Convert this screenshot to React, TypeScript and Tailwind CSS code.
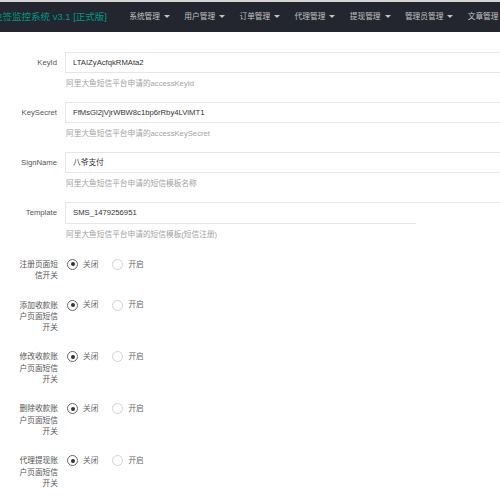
import React from 'react';

const menus = ['系统管理', '用户管理', '订单管理', '代理管理', '提现管理', '管理员管理', '文章管理'];

const inputs = [
    { label: 'KeyId', value: 'LTAIZyAcfqkRMAta2', tip: '阿里大鱼短信平台申请的accessKeyId', short: false },
    { label: 'KeySecret', value: 'FfMsGl2jVjrWBW8c1bp6rRby4LVlMT1', tip: '阿里大鱼短信平台申请的accessKeySecret', short: false },
    { label: 'SignName', value: '八爷支付', tip: '阿里大鱼短信平台申请的短信模板名称', short: false },
    { label: 'Template', value: 'SMS_1479256951', tip: '阿里大鱼短信平台申请的短信模板(短信注册)', short: true },
];

const switches = [
    '注册页面短信开关',
    '添加收款账户页面短信开关',
    '修改收款账户页面短信开关',
    '删除收款账户页面短信开关',
    '代理提现账户页面短信开关',
];

function Radio({ checked, text }: { checked: boolean; text: string }) {
    return (
        <div className="flex items-center">
            <span
                className={
                    'flex h-[11px] w-[11px] items-center justify-center rounded-full border ' +
                    (checked ? 'border-[#666]' : 'border-[#d2d2d2]')
                }
            >
                {checked && <span className="h-[4px] w-[4px] rounded-full bg-[#333]" />}
            </span>
            <span className="ml-[5px] text-[#666]">{text}</span>
        </div>
    );
}

export default function App() {
    return (
        <div className="w-[500px] h-[498px] overflow-hidden bg-white font-['Liberation_Sans','Noto_Sans_CJK_SC',sans-serif] text-[7.7px]">
            {/* header */}
            <div className="h-[2px] bg-[#d6d6d6]" />
            <div className="flex h-[30px] items-center bg-[#23262E] whitespace-nowrap">
                <div className="w-[122px] shrink-0 overflow-hidden">
                    <span className="ml-[-7px] text-[9.5px] text-[#009688]">免签监控系统 v3.1 [正式版]</span>
                </div>
                <div className="flex">
                    {menus.map((m) => (
                        <div key={m} className="flex items-center px-[7.2px] text-[#c2c2c2]">
                            <span>{m}</span>
                            <span className="ml-[4px] h-0 w-0 border-x-[3px] border-t-[3.5px] border-x-transparent border-t-[#c2c2c2]" />
                        </div>
                    ))}
                </div>
            </div>

            {/* form */}
            <div className="pt-[20px]">
                {inputs.map((f) => (
                    <div key={f.label} className="mb-[8px] flex">
                        <div className="w-[65px] shrink-0 py-[5px] pr-[8px] text-right leading-[11.3px] text-[#555]">
                            {f.label}
                        </div>
                        <div className="flex-1 min-w-0">
                            {f.short ? (
                                <>
                                    <div className="flex h-[21px] w-[520px] items-center border-l border-t border-r border-[#e6e6e6] pl-[7px] text-[#333]">
                                        {f.value}
                                    </div>
                                    <div className="h-px w-[351px] bg-[#e6e6e6]" />
                                </>
                            ) : (
                                <div className="flex h-[21px] w-[520px] items-center border border-[#e6e6e6] pl-[7px] text-[#333]">
                                    {f.value}
                                </div>
                            )}
                            <div className={'pl-[1px] leading-[21px] text-[#a3a3a3] ' + (f.short ? 'h-[20px]' : 'h-[21px]')}>
                                {f.tip}
                            </div>
                        </div>
                    </div>
                ))}

                <div className="pt-[2px]">
                    {switches.map((s) => (
                        <div key={s} className="mb-[8px] flex">
                            <div className="w-[65px] shrink-0 py-[5px] pl-[17px] pr-[7px] text-right leading-[11.3px] text-[#555]">
                                {s}
                            </div>
                            <div className="flex h-[21px] items-center gap-[14px] pl-[2px]">
                                <Radio checked text="关闭" />
                                <Radio checked={false} text="开启" />
                            </div>
                        </div>
                    ))}
                </div>
            </div>
        </div>
    );
}
